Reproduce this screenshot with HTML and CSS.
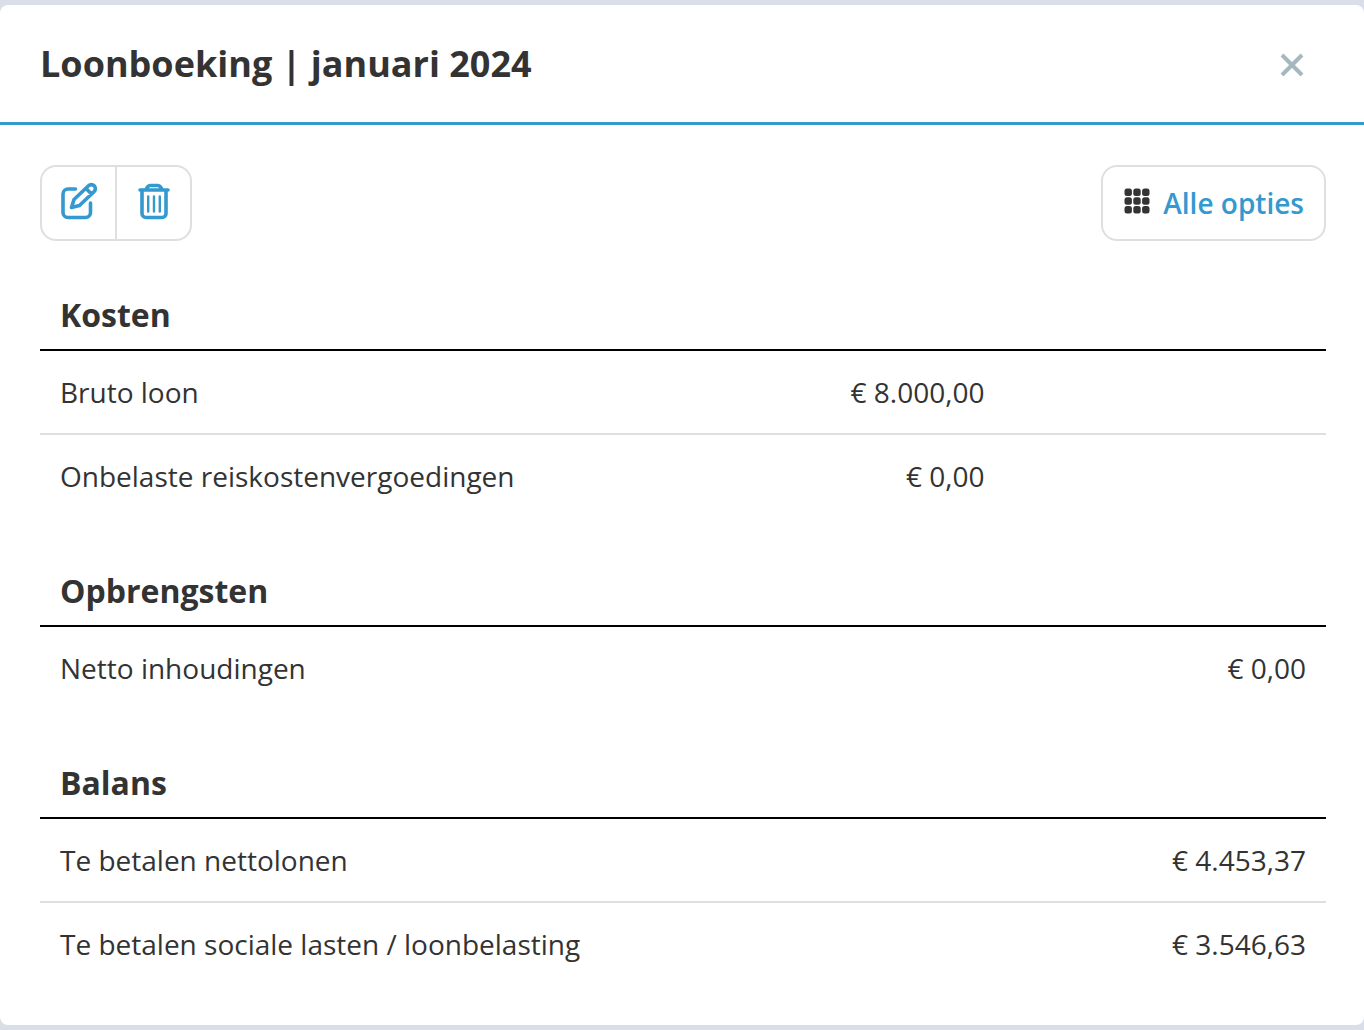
FILE: index.html
```html
<!DOCTYPE html>
<html lang="nl">
<head>
  <meta charset="UTF-8" />
  <title>Loonboeking | januari 2024</title>
  <meta name="viewport" content="width=device-width, initial-scale=1.0" />
  <link rel="stylesheet" href="styles.css">
</head>
<body>
  <main class="panel">
    <header class="panel-header">
      <h1>Loonboeking | januari 2024</h1>
      <button type="button" class="close-button" aria-label="Sluiten">
        <svg width="24" height="24" viewBox="0 0 24 24" fill="none" stroke="currentColor" stroke-width="4">
          <path d="M2 2l20 20M22 2L2 22" />
        </svg>
      </button>
    </header>

    <div class="panel-body">
      <div class="toolbar">
        <div class="button-group">
          <button type="button" class="icon-button" aria-label="Bewerken">
            <svg width="40" height="40" viewBox="0 0 40 40" fill="none" stroke="currentColor" stroke-width="3.6" stroke-linecap="round" stroke-linejoin="round">
              <path d="M16.5 8H9a5 5 0 0 0-5 5v18.500a5 5 0 0 0 5 5h17.500a5 5 0 0 0 5-5v-9.500" />
              <path d="M12.5 26.5l2.5-8L29.5 4.8a4 4 0 0 1 5.7 5.7L20.5 24.5zM27 7.5l5.5 5.5" />
            </svg>
          </button>
          <button type="button" class="icon-button" aria-label="Verwijderen">
            <svg width="40" height="40" viewBox="0 0 40 40" fill="none" stroke="currentColor" stroke-width="3.6" stroke-linecap="round" stroke-linejoin="round">
              <path d="M6 9h28M12 8.500l1.500-2.500a3 3 0 0 1 2.500-1.500h8a3 3 0 0 1 2.500 1.500L28 8.500" />
              <path d="M8 9.500v23a4 4 0 0 0 4 4h16a4 4 0 0 0 4-4V9.500" />
              <path stroke-width="2.4" d="M14.200 15.500v15M20 15.500v15M25.800 15.500v15" />
            </svg>
          </button>
        </div>
        <button type="button" class="options-button">
          <svg width="26" height="26" viewBox="0 0 26 26" fill="#333">
            <rect x="0.5" y="0.5" width="7.4" height="7.4" rx="2.5" />
            <rect x="9.3" y="0.5" width="7.4" height="7.4" rx="2.5" />
            <rect x="18.1" y="0.5" width="7.4" height="7.4" rx="2.5" />
            <rect x="0.5" y="9.3" width="7.4" height="7.4" rx="2.5" />
            <rect x="9.3" y="9.3" width="7.4" height="7.4" rx="2.5" />
            <rect x="18.1" y="9.3" width="7.4" height="7.4" rx="2.5" />
            <rect x="0.5" y="18.1" width="7.4" height="7.4" rx="2.5" />
            <rect x="9.3" y="18.1" width="7.4" height="7.4" rx="2.5" />
            <rect x="18.1" y="18.1" width="7.4" height="7.4" rx="2.5" />
          </svg>
          <span>Alle opties</span>
        </button>
      </div>

      <section class="booking">
        <h2 id="kosten">Kosten</h2>
        <table aria-labelledby="kosten">
          <tr>
            <td class="name">Bruto loon</td>
            <td class="amount">€ 8.000,00</td>
            <td class="amount"></td>
          </tr>
          <tr>
            <td class="name">Onbelaste reiskostenvergoedingen</td>
            <td class="amount">€ 0,00</td>
            <td class="amount"></td>
          </tr>
        </table>
      </section>

      <section class="booking">
        <h2 id="opbrengsten">Opbrengsten</h2>
        <table aria-labelledby="opbrengsten">
          <tr>
            <td class="name">Netto inhoudingen</td>
            <td class="amount"></td>
            <td class="amount">€ 0,00</td>
          </tr>
        </table>
      </section>

      <section class="booking">
        <h2 id="balans">Balans</h2>
        <table aria-labelledby="balans">
          <tr>
            <td class="name">Te betalen nettolonen</td>
            <td class="amount"></td>
            <td class="amount">€ 4.453,37</td>
          </tr>
          <tr>
            <td class="name">Te betalen sociale lasten / loonbelasting</td>
            <td class="amount"></td>
            <td class="amount">€ 3.546,63</td>
          </tr>
        </table>
      </section>
    </div>
  </main>
</body>
</html>
```

FILE: styles.css
```css
* {
  box-sizing: border-box;
}
body {
  margin: 0;
  padding: 5px 0;
  font-family: "Open Sans", "Noto Sans", sans-serif;
  font-size: 28px;
  line-height: 40px;
  color: #333;
  background-color: #dadee8;
}
.panel {
  background-color: #fff;
  border-radius: 8px;
}
.panel-header {
  display: flex;
  align-items: center;
  justify-content: space-between;
  padding: 34px 60px 33px 40px;
  border-bottom: 3px solid #3399cf;
}
h1 {
  margin: 0;
  font-size: 36px;
  line-height: 50px;
}
button {
  font: inherit;
  background: none;
  border: none;
  cursor: pointer;
}
svg {
  display: block;
}
.close-button {
  padding: 2px 0 0;
  color: #a3b8bf;
}
.panel-body {
  padding: 40px 38px 40px 40px;
}
.toolbar {
  display: flex;
  justify-content: space-between;
  margin-bottom: 52px;
}
.button-group {
  display: flex;
  border: 2px solid #dfdfdf;
  border-radius: 16px;
}
.icon-button {
  padding: 14px 16px 18px 17px;
  color: #3399cf;
}
.icon-button + .icon-button {
  border-left: 2px solid #dfdfdf;
}
.options-button {
  display: flex;
  align-items: center;
  gap: 13px;
  height: 76px;
  padding: 0 20px 0 21px;
  border: 2px solid #dfdfdf;
  border-radius: 16px;
  color: #3399cf;
  font-weight: 600;
}
.options-button svg {
  margin-bottom: 4px;
}
.booking + .booking {
  margin-top: 52px;
}
h2 {
  margin: 0;
  padding: 0 20px 12px;
  font-size: 32px;
  line-height: 44px;
  border-bottom: 2px solid #000;
}
table {
  width: 100%;
  table-layout: fixed;
  border-collapse: separate;
  border-spacing: 0;
}
td {
  padding: 21px 20px;
}
tr + tr td {
  border-top: 2px solid #dfdfdf;
}
.name {
  width: 50%;
}
.amount {
  width: 25%;
  text-align: right;
}
```
